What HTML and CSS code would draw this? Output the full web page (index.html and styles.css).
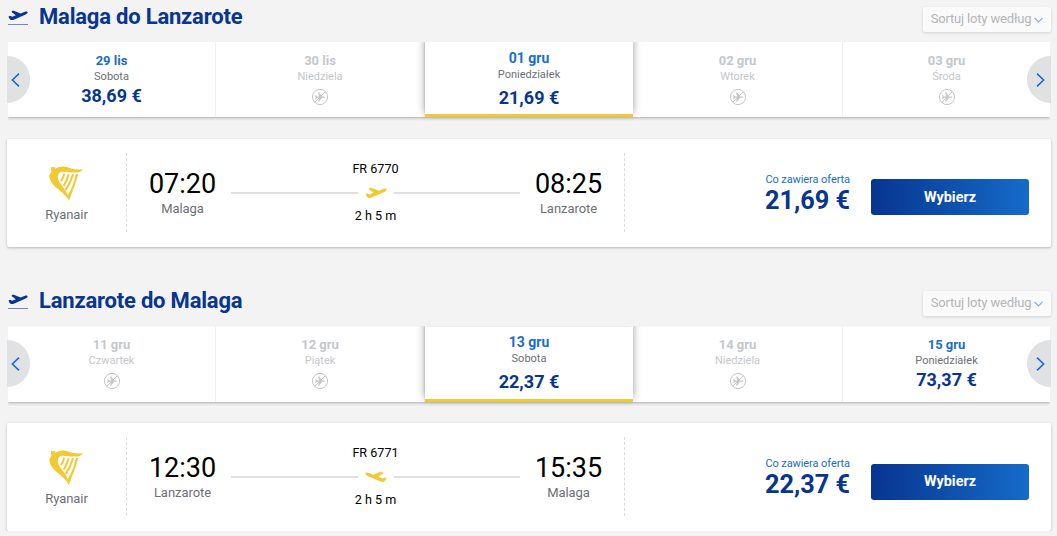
FILE: index.html
```html
<!DOCTYPE html>
<html lang="pl">
<head>
    <meta charset="UTF-8">
    <meta name="viewport" content="width=device-width, initial-scale=1.0">
    <title>Malaga - Lanzarote</title>
    <link rel="stylesheet" href="styles.css">
</head>
<body>
    <!-- Shared icons -->
    <svg class="icon-defs" width="0" height="0">
        <symbol id="plane" viewBox="0 0 22 12">
            <path d="M0.5 7 2.4 6.4 4.6 7.4 8.6 5.8 3.8 2.2C4.2 1 5.6 0.6 7 1L13.8 3.8 18 2.1C20 1.3 21.5 1.4 21.6 2.4 21.7 3.5 20.6 4.4 19.4 4.9L6.4 10.6C3.8 11.5 2.5 10.9 1.7 9.6Z"/>
        </symbol>
        <symbol id="harp" viewBox="0 0 102 104">
            <path d="M6 3H19V14H6Z"/>
            <path d="M16 10C28 0 43-1 56 3 70 9 84 11 102 9 96 17 88 19 79 19 61 20 46 15 37 17 28 20 25 28 27 38 30 50 41 60 48 71 56 82 58 91 60 104 52 88 38 78 25 67 10 55 0 40 1 27L9 14Z"/>
            <path class="harp-string" d="M46 23Q43 34 36 45M59 24Q54 42 44 59M72 24Q65 49 50 71"/>
            <path d="M80 24 88 23C82 46 72 72 60 104L56 88C67 68 76 48 80 24Z"/>
        </symbol>
        <symbol id="no-flight" viewBox="0 0 18 18">
            <circle cx="9" cy="9" r="7.6" fill="none" stroke="currentColor" stroke-width="1"/>
            <path d="M4 7.2 5 7.2 6.2 8.5 8.2 8.5 7 4.6 8.3 4.6 11 8.4 13.3 8.4 14.5 9.1 13.3 9.8 11 9.8 8.3 13.5 7 13.5 8.2 9.8 6.2 9.8 5 11 4 11 4.7 9.1Z"/>
            <path d="M3.6 14.4 14.4 3.6" fill="none" stroke="currentColor" stroke-width="1"/>
        </symbol>
        <symbol id="chevron" viewBox="0 0 9 14">
            <path d="M8 0.7 1.4 7 8 13.3" fill="none" stroke="currentColor" stroke-width="1.6"/>
        </symbol>
    </svg>

    <main>
        <!-- Outbound -->
        <section class="journey">
            <header class="journey-header">
                <span class="title-icon"><svg width="20" height="11"><use href="#plane"/></svg></span>
                <h2>Malaga do Lanzarote</h2>
                <button class="sort-btn">Sortuj loty według <svg width="9" height="6" viewBox="0 0 9 6"><path d="M0.5 0.8 4.5 4.8 8.5 0.8"/></svg></button>
            </header>

            <div class="date-carousel">
                <div class="dates">
                    <div class="date-item">
                        <span class="date">29 lis</span>
                        <span class="day">Sobota</span>
                        <span class="price">38,69 €</span>
                    </div>
                    <div class="date-item disabled">
                        <span class="date">30 lis</span>
                        <span class="day">Niedziela</span>
                        <svg class="no-flight"><use href="#no-flight"/></svg>
                    </div>
                    <div class="date-item active">
                        <span class="date">01 gru</span>
                        <span class="day">Poniedziałek</span>
                        <span class="price">21,69 €</span>
                    </div>
                    <div class="date-item disabled">
                        <span class="date">02 gru</span>
                        <span class="day">Wtorek</span>
                        <svg class="no-flight"><use href="#no-flight"/></svg>
                    </div>
                    <div class="date-item disabled">
                        <span class="date">03 gru</span>
                        <span class="day">Środa</span>
                        <svg class="no-flight"><use href="#no-flight"/></svg>
                    </div>
                </div>
                <button class="arrow prev"><svg width="9" height="14"><use href="#chevron"/></svg></button>
                <button class="arrow next"><svg width="9" height="14"><use href="#chevron"/></svg></button>
            </div>

            <article class="flight-card">
                <div class="airline">
                    <svg class="harp" width="34" height="35"><use href="#harp"/></svg>
                    <span>Ryanair</span>
                </div>
                <div class="route">
                    <div class="stop">
                        <span class="time">07:20</span>
                        <span class="city">Malaga</span>
                    </div>
                    <div class="path">
                        <span>FR 6770</span>
                        <div class="line"><svg class="line-plane" width="22" height="12"><use href="#plane"/></svg></div>
                        <span>2 h 5 m</span>
                    </div>
                    <div class="stop">
                        <span class="time">08:25</span>
                        <span class="city">Lanzarote</span>
                    </div>
                </div>
                <div class="offer">
                    <div class="offer-price">
                        <a href="#">Co zawiera oferta</a>
                        <strong>21,69 €</strong>
                    </div>
                    <button class="select-btn">Wybierz</button>
                </div>
            </article>
        </section>

        <!-- Return -->
        <section class="journey">
            <header class="journey-header">
                <span class="title-icon"><svg width="20" height="11"><use href="#plane"/></svg></span>
                <h2>Lanzarote do Malaga</h2>
                <button class="sort-btn">Sortuj loty według <svg width="9" height="6" viewBox="0 0 9 6"><path d="M0.5 0.8 4.5 4.8 8.5 0.8"/></svg></button>
            </header>

            <div class="date-carousel">
                <div class="dates">
                    <div class="date-item disabled">
                        <span class="date">11 gru</span>
                        <span class="day">Czwartek</span>
                        <svg class="no-flight"><use href="#no-flight"/></svg>
                    </div>
                    <div class="date-item disabled">
                        <span class="date">12 gru</span>
                        <span class="day">Piątek</span>
                        <svg class="no-flight"><use href="#no-flight"/></svg>
                    </div>
                    <div class="date-item active">
                        <span class="date">13 gru</span>
                        <span class="day">Sobota</span>
                        <span class="price">22,37 €</span>
                    </div>
                    <div class="date-item disabled">
                        <span class="date">14 gru</span>
                        <span class="day">Niedziela</span>
                        <svg class="no-flight"><use href="#no-flight"/></svg>
                    </div>
                    <div class="date-item">
                        <span class="date">15 gru</span>
                        <span class="day">Poniedziałek</span>
                        <span class="price">73,37 €</span>
                    </div>
                </div>
                <button class="arrow prev"><svg width="9" height="14"><use href="#chevron"/></svg></button>
                <button class="arrow next"><svg width="9" height="14"><use href="#chevron"/></svg></button>
            </div>

            <article class="flight-card">
                <div class="airline">
                    <svg class="harp" width="34" height="35"><use href="#harp"/></svg>
                    <span>Ryanair</span>
                </div>
                <div class="route">
                    <div class="stop">
                        <span class="time">12:30</span>
                        <span class="city">Lanzarote</span>
                    </div>
                    <div class="path">
                        <span>FR 6771</span>
                        <div class="line"><svg class="line-plane landing" width="22" height="12"><use href="#plane"/></svg></div>
                        <span>2 h 5 m</span>
                    </div>
                    <div class="stop">
                        <span class="time">15:35</span>
                        <span class="city">Malaga</span>
                    </div>
                </div>
                <div class="offer">
                    <div class="offer-price">
                        <a href="#">Co zawiera oferta</a>
                        <strong>22,37 €</strong>
                    </div>
                    <button class="select-btn">Wybierz</button>
                </div>
            </article>
        </section>
    </main>
</body>
</html>
```

FILE: styles.css
```css
* {
    box-sizing: border-box;
}

body {
    margin: 0;
    background-color: #f3f3f3;
    font-family: Roboto, sans-serif;
    color: #000;
}

button {
    font-family: inherit;
    border: none;
    padding: 0;
    cursor: pointer;
}

svg {
    display: block;
    fill: currentColor;
}

.icon-defs {
    position: absolute;
}

main {
    padding: 0 6px 0 7px;
}

.journey + .journey {
    margin-top: 37.2px;
}

/* Title row */
.journey-header {
    display: flex;
    align-items: flex-start;
    height: 42px;
    padding-left: 1px;
    color: #073590;
}

.title-icon {
    width: 20px;
    height: 15px;
    margin-top: 10px;
    border-bottom: 1px solid #7089c2;
}

h2 {
    margin: 3px 0 0 11px;
    font-size: 22px;
    line-height: 27px;
    font-weight: 700;
    letter-spacing: -0.2px;
}

.sort-btn {
    display: flex;
    align-items: center;
    justify-content: center;
    gap: 3px;
    width: 128px;
    height: 25px;
    margin: 7px 0 0 auto;
    padding-bottom: 2px;
    background-color: #fafafa;
    border-radius: 2px;
    box-shadow: 0 1px 3px rgba(0, 0, 0, 0.14);
    color: #b3b5b8;
    font-size: 13px;
    letter-spacing: -0.17px;
}

.sort-btn svg {
    margin-top: 2px;
}

.sort-btn svg path {
    fill: none;
    stroke: #82ade0;
    stroke-width: 1.2;
}

/* Date carousel */
.date-carousel {
    position: relative;
    height: 75.4px;
}

.dates {
    display: grid;
    grid-template-columns: 208px 209px 208px 210px 1fr;
    height: 100%;
    margin: 0 1px;
    background-color: #fff;
    box-shadow: 0 1px 3px rgba(0, 0, 0, 0.3);
    clip-path: inset(0 0 -5px 0);
}

.date-item {
    display: flex;
    flex-direction: column;
    align-items: center;
    padding-top: 10px;
    border-right: 1px solid #f1f1f1;
    color: #073590;
}

.date-item:last-child {
    border-right: none;
}

.date {
    font-size: 13px;
    line-height: 18px;
    font-weight: 700;
    color: #1a6dc9;
}

.day {
    font-size: 11px;
    line-height: 13px;
    color: #6c7077;
}

.price {
    margin-top: 2px;
    font-size: 18px;
    line-height: 22px;
    font-weight: 700;
}

.no-flight {
    width: 18px;
    height: 18px;
    margin-top: 5px;
}

.date-item.disabled,
.date-item.disabled .date,
.date-item.disabled .day {
    color: #c4c7cb;
}

.date-item.active {
    z-index: 1;
    padding-top: 7px;
    background-color: #fff;
    border-right: none;
    border-bottom: 3px solid #f1c933;
    box-shadow: 0 -4px 8px rgba(0, 0, 0, 0.4);
}

.date-item.active .date {
    font-size: 14px;
    line-height: 19px;
}

.date-item.active .price {
    margin-top: 6px;
}

.arrow {
    position: absolute;
    z-index: 2;
    top: 14px;
    width: 23px;
    height: 47px;
    background-color: #e0e1e3;
    color: #1a6dc9;
}

.prev {
    left: 0;
    padding-left: 4px;
    border-radius: 0 24px 24px 0;
}

.next {
    right: 0;
    width: 24px;
    padding-left: 9px;
    border-radius: 24px 0 0 24px;
}

.next svg {
    transform: scaleX(-1);
}

/* Flight card */
.flight-card {
    display: flex;
    align-items: flex-start;
    height: 108px;
    margin-top: 21.6px;
    padding-top: 14.3px;
    background-color: #fff;
    border-radius: 2px;
    box-shadow: 0 1px 3px rgba(0, 0, 0, 0.25);
}

.airline {
    display: flex;
    flex-direction: column;
    align-items: center;
    width: 120px;
    height: 79px;
    padding-top: 13px;
    border-right: 1px dashed #dcdcdc;
    color: #6c7077;
    font-size: 13px;
    letter-spacing: -0.05px;
}

.airline span {
    margin-top: 6px;
}

.harp {
    margin-right: 1px;
    color: #f1c933;
}

.harp-string {
    fill: none;
    stroke: currentColor;
    stroke-width: 6;
}

.route {
    display: flex;
    justify-content: space-between;
    width: 498px;
    height: 79px;
    padding: 0 22px;
    border-right: 1px dashed #dcdcdc;
}

.stop {
    display: flex;
    flex-direction: column;
    align-items: center;
    width: 67px;
    padding-top: 16px;
}

.time {
    font-size: 27px;
    line-height: 30px;
}

.city {
    margin-top: 2px;
    font-size: 13px;
    line-height: 16px;
    color: #6c7077;
    letter-spacing: -0.05px;
}

.path {
    display: flex;
    flex-direction: column;
    align-items: center;
    width: 289px;
    padding-top: 8px;
    font-size: 12.6px;
    line-height: 16px;
}

.line {
    display: flex;
    align-items: center;
    gap: 7px;
    width: 100%;
    height: 12px;
    margin: 10px 0 9px;
    color: #f1c933;
}

.line::before,
.line::after {
    content: '';
    flex: 1;
    height: 2px;
    background-color: #e0e0e0;
}

.landing {
    transform: scaleX(-1);
}

.offer {
    display: flex;
    align-items: flex-start;
    gap: 21px;
    margin-left: auto;
    padding: 20px 22px 0 0;
}

.offer-price {
    display: flex;
    flex-direction: column;
    align-items: flex-end;
}

.offer-price a {
    color: #1a6dc9;
    font-size: 11px;
    line-height: 13px;
    letter-spacing: -0.08px;
    text-decoration: none;
}

.offer-price strong {
    margin-top: 1px;
    color: #073590;
    font-size: 25.3px;
    line-height: 28px;
    font-weight: 700;
}

.select-btn {
    width: 158px;
    height: 36px;
    margin-top: 6.1px;
    border-radius: 3px;
    background: linear-gradient(90deg, #073590, #156bc9);
    color: #fff;
    font-size: 14.4px;
    font-weight: 700;
}
```
